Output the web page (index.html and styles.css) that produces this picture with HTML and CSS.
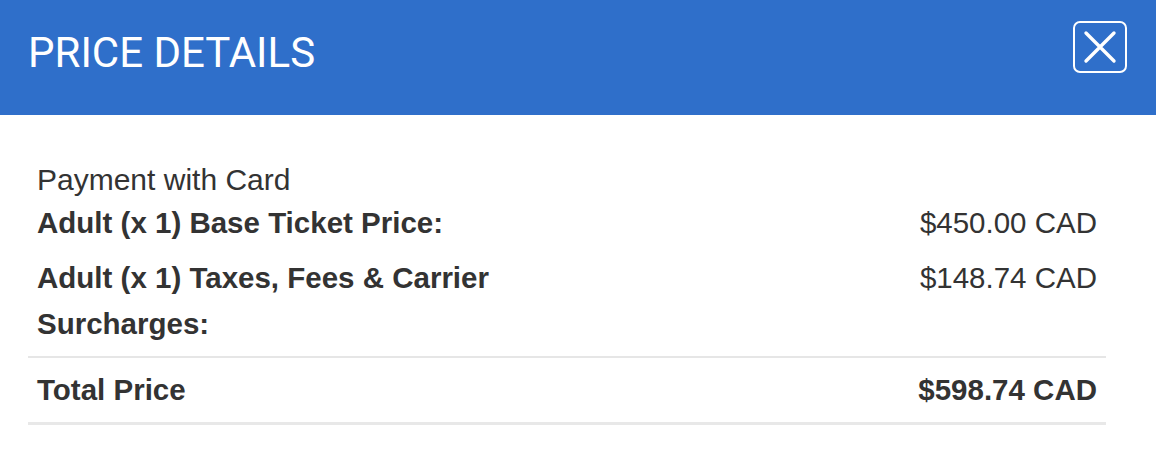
FILE: index.html
```html
<!DOCTYPE html>
<html>
<head>
<meta charset="utf-8">
<link rel="stylesheet" href="styles.css">
</head>
<body>
<div class="modal">
  <header class="modal-header">
    <h1 class="modal-title">PRICE DETAILS</h1>
    <button class="close-btn" aria-label="Close">
      <svg width="34" height="34" viewBox="0 0 34 34"><path d="M3 3 L31 31 M31 3 L3 31" stroke="#fff" stroke-width="3.4" stroke-linecap="round" fill="none"/></svg>
    </button>
  </header>
  <section class="modal-body">
    <div class="price-table">
      <div class="payment">Payment with Card</div>
      <div class="row">
        <div class="label">Adult (x 1) Base Ticket Price:</div>
        <div class="value">$450.00 CAD</div>
      </div>
      <div class="row">
        <div class="label">Adult (x 1) Taxes, Fees &amp; Carrier Surcharges:</div>
        <div class="value">$148.74 CAD</div>
      </div>
      <div class="row total">
        <div class="label">Total Price</div>
        <div class="value">$598.74 CAD</div>
      </div>
    </div>
  </section>
</div>
</body>
</html>
```

FILE: styles.css
```css
* { box-sizing: border-box; }
body {
  margin: 0;
  background: #fff;
  font-family: "Liberation Sans", Arial, Helvetica, sans-serif;
  color: #333;
}
.modal-header {
  height: 115px;
  background: #2f6fca;
  display: flex;
  align-items: center;
  justify-content: space-between;
  padding: 0 29px 0 28px;
}
.modal-title {
  margin: 0;
  margin-top: -10px;
  font-family: Roboto, "Liberation Sans", sans-serif;
  font-weight: 400;
  font-size: 42px;
  color: #fff;
}
.close-btn {
  width: 54px;
  height: 52px;
  margin-top: -21px;
  border: 2px solid #fff;
  border-radius: 7px;
  background: transparent;
  display: flex;
  align-items: center;
  justify-content: center;
  padding: 0;
}
.modal-body {
  padding: 45px 50px 0 28px;
}
.price-table {
  width: 1078px;
  border-bottom: 3px solid #e8e8e8;
}
.payment {
  padding: 0 9px;
  font-size: 30px;
  line-height: 40px;
}
.row {
  display: grid;
  grid-template-columns: 1fr 1fr;
  padding-bottom: 9px;
  font-size: 29.5px;
  line-height: 46px;
}
.row .label {
  padding: 0 9px;
  font-weight: 700;
}
.row .value {
  padding: 0 9px;
  text-align: right;
}
.row.total {
  border-top: 2px solid #e6e6e6;
  padding-top: 9px;
  padding-bottom: 9px;
}
.row.total .value { font-weight: 700; }
```
